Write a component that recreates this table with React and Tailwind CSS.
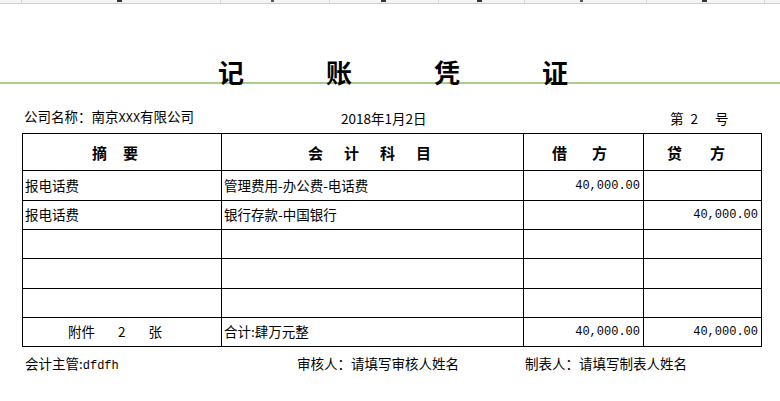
const CJK = "font-['Noto_Sans_CJK_SC',sans-serif]";
const MONO = "font-['Liberation_Mono','Noto_Sans_CJK_SC',monospace]";

const ROWS = [
  { h: "h-[30px]", summary: "报电话费", account: "管理费用-办公费-电话费", debit: "40,000.00", credit: "" },
  { h: "h-[29px]", summary: "报电话费", account: "银行存款-中国银行", debit: "", credit: "40,000.00" },
  { h: "h-[29px]", summary: "", account: "", debit: "", credit: "" },
  { h: "h-[30px]", summary: "", account: "", debit: "", credit: "" },
  { h: "h-[29px]", summary: "", account: "", debit: "", credit: "" },
];

function Cell({ className = "", children }) {
  return <div className={`border-r border-b border-black flex items-center overflow-hidden ${className}`}>{children}</div>;
}

function HeadChars({ chars, pl, gap }) {
  return (
    <Cell className={`h-[37px] ${pl}`}>
      <div className={`flex ${gap} text-[15px] font-bold leading-none`}>
        {chars.map((c) => <span key={c}>{c}</span>)}
      </div>
    </Cell>
  );
}

export default function App() {
  return (
    <div className={`w-[780px] h-[401px] bg-white text-black overflow-hidden ${CJK}`}>
      {/* sheet strip */}
      <div className="h-[4px] bg-[#f4f4f4] border-b border-[#cfcfcf] flex">
        <div className="w-[22px] border-r border-[#d8d8d8]" />
        <div className="w-[199px] border-r border-[#d8d8d8] relative"><span className="absolute left-[95px] top-0 w-[5px] h-[2px] bg-[#333]" /></div>
        <div className="w-[109px] border-r border-[#d8d8d8] relative"><span className="absolute left-[50px] top-0 w-[3px] h-[2px] bg-[#555]" /></div>
        <div className="w-[109px] border-r border-[#d8d8d8] relative"><span className="absolute left-[51px] top-0 w-[5px] h-[2px] bg-[#333]" /></div>
        <div className="w-[86px] border-r border-[#d8d8d8] relative"><span className="absolute left-[38px] top-0 w-[5px] h-[2px] bg-[#333]" /></div>
        <div className="w-[122px] border-r border-[#d8d8d8] relative"><span className="absolute left-[55px] top-0 w-[3px] h-[2px] bg-[#555]" /></div>
        <div className="w-[118px] border-r border-[#d8d8d8] relative"><span className="absolute left-[55px] top-0 w-[5px] h-[2px] bg-[#333]" /></div>
        <div className="flex-1" />
      </div>

      {/* title */}
      <div className="h-[80px] border-b-2 border-[#a3cf8a] flex items-end pl-[218px] gap-[82px]">
        {["记", "账", "凭", "证"].map((c) => (
          <span key={c} className="w-[26px] text-[26px] font-bold leading-none -mb-[3px]">{c}</span>
        ))}
      </div>

      {/* info row */}
      <div className="h-[49px] flex items-end pb-[8px] text-[13.5px] leading-none">
        <div className="pl-[24px] w-[341px]">
          公司名称：南京<span className={`${MONO} text-[12px]`}>XXX</span>有限公司
        </div>
        <div className="w-[329px]">2018年1月2日</div>
        <div className="flex">
          <span>第</span>
          <span className="ml-[7px] mr-[17px]">2</span>
          <span>号</span>
        </div>
      </div>

      {/* voucher table */}
      <div className="ml-[22px] w-[740px] border-l border-t border-black grid grid-cols-[199px_302px_120px_118px] text-[13.5px] leading-none">
        <HeadChars chars={["摘", "要"]} pl="pl-[69px]" gap="gap-[16px]" />
        <HeadChars chars={["会", "计", "科", "目"]} pl="pl-[86px]" gap="gap-[21px]" />
        <HeadChars chars={["借", "方"]} pl="pl-[28px]" gap="gap-[25px]" />
        <HeadChars chars={["贷", "方"]} pl="pl-[23px]" gap="gap-[28px]" />

        {ROWS.map((r, i) => (
          <div key={i} className="contents">
            <Cell className={`${r.h} pl-[2px]`}>{r.summary}</Cell>
            <Cell className={`${r.h} pl-[2px]`}>{r.account}</Cell>
            <Cell className={`${r.h} justify-end pr-[3px] ${MONO} text-[12px]`}>{r.debit}</Cell>
            <Cell className={`${r.h} justify-end pr-[3px] ${MONO} text-[12px]`}>{r.credit}</Cell>
          </div>
        ))}

        <Cell className="h-[29px] pl-[45px]">
          <span>附件</span>
          <span className="ml-[23px]">2</span>
          <span className="ml-[23px]">张</span>
        </Cell>
        <Cell className="h-[29px] pl-[2px]">合计:肆万元整</Cell>
        <Cell className={`h-[29px] justify-end pr-[3px] ${MONO} text-[12px]`}>40,000.00</Cell>
        <Cell className={`h-[29px] justify-end pr-[3px] ${MONO} text-[12px]`}>40,000.00</Cell>
      </div>

      {/* signatures */}
      <div className="flex pt-[10px] text-[13.5px] leading-none">
        <div className="pl-[25px] w-[297px]">会计主管:<span className={`${MONO} text-[12px]`}>dfdfh</span></div>
        <div className="w-[228px]">审核人：请填写审核人姓名</div>
        <div>制表人：请填写制表人姓名</div>
      </div>
    </div>
  );
}
